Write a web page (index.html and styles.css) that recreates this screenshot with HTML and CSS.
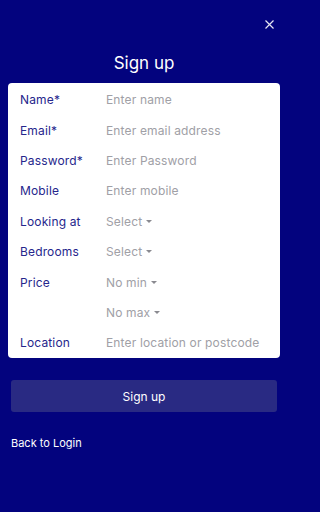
FILE: index.html
```html
<!DOCTYPE html>
<html lang="en">
<head>
<meta charset="utf-8">
<title>Sign up</title>
<link rel="stylesheet" href="styles.css">
</head>
<body>
<div class="page">
  <div class="topbar">
    <button class="close" aria-label="Close">
      <svg width="9" height="9" viewBox="0 0 9 9"><path d="M0.5 0.5L8.5 8.5M8.5 0.5L0.5 8.5" stroke="#e6e6f2" stroke-width="1.2" fill="none"/></svg>
    </button>
  </div>
  <h1 class="title">Sign up</h1>
  <div class="card">
    <div class="row"><span class="label">Name*</span><span class="value">Enter name</span></div>
    <div class="row"><span class="label">Email*</span><span class="value">Enter email address</span></div>
    <div class="row"><span class="label">Password*</span><span class="value">Enter Password</span></div>
    <div class="row"><span class="label">Mobile</span><span class="value">Enter mobile</span></div>
    <div class="row"><span class="label">Looking at</span><span class="value select">Select<i class="caret"></i></span></div>
    <div class="row"><span class="label">Bedrooms</span><span class="value select">Select<i class="caret"></i></span></div>
    <div class="row"><span class="label">Price</span><span class="value select">No min<i class="caret"></i></span></div>
    <div class="row"><span class="label"></span><span class="value select">No max<i class="caret"></i></span></div>
    <div class="row"><span class="label">Location</span><span class="value">Enter location or postcode</span></div>
  </div>
  <button class="submit">Sign up</button>
  <a class="back" href="#">Back to Login</a>
</div>
</body>
</html>
```
FILE: styles.css
```css
html, body {
  margin: 0;
  padding: 0;
  background: #03037e;
  font-family: "Inter", "Noto Sans", sans-serif;
}
.page {
  width: 288px;
  height: 512px;
  box-sizing: border-box;
  padding: 0 8px;
  display: flex;
  flex-direction: column;
}
.topbar {
  display: flex;
  justify-content: flex-end;
  padding-top: 20px;
  height: 9px;
}
.close {
  background: none;
  border: 0;
  padding: 0;
  margin-right: 6px;
  width: 9px;
  height: 9px;
  display: block;
  line-height: 0;
}
.title {
  margin: 22px 0 0;
  text-align: center;
  color: #ffffff;
  font-weight: 400;
  font-size: 17px;
  line-height: 24px;
}
.card {
  margin-top: 8px;
  padding-top: 1.5px;
  background: #ffffff;
  border-radius: 4px;
  display: flex;
  flex-direction: column;
}
.row {
  height: 30.4px;
  display: flex;
  align-items: center;
  font-size: 12px;
  letter-spacing: 0.15px;
  padding-left: 12px;
}
.label {
  width: 86px;
  color: #26268c;
}
.value {
  color: #a0a0a6;
  display: flex;
  align-items: center;
}
.caret {
  width: 0;
  height: 0;
  margin-left: 4px;
  border-left: 3px solid transparent;
  border-right: 3px solid transparent;
  border-top: 3.5px solid #8a8a90;
}
.submit {
  margin: 22px 3px 0;
  height: 32px;
  border: 0;
  border-radius: 3px;
  background: #292a83;
  color: #ffffff;
  font-family: inherit;
  font-size: 12px;
}
.back {
  margin: 24px 3px 0;
  color: #ffffff;
  font-size: 11px;
  text-decoration: none;
}
```
